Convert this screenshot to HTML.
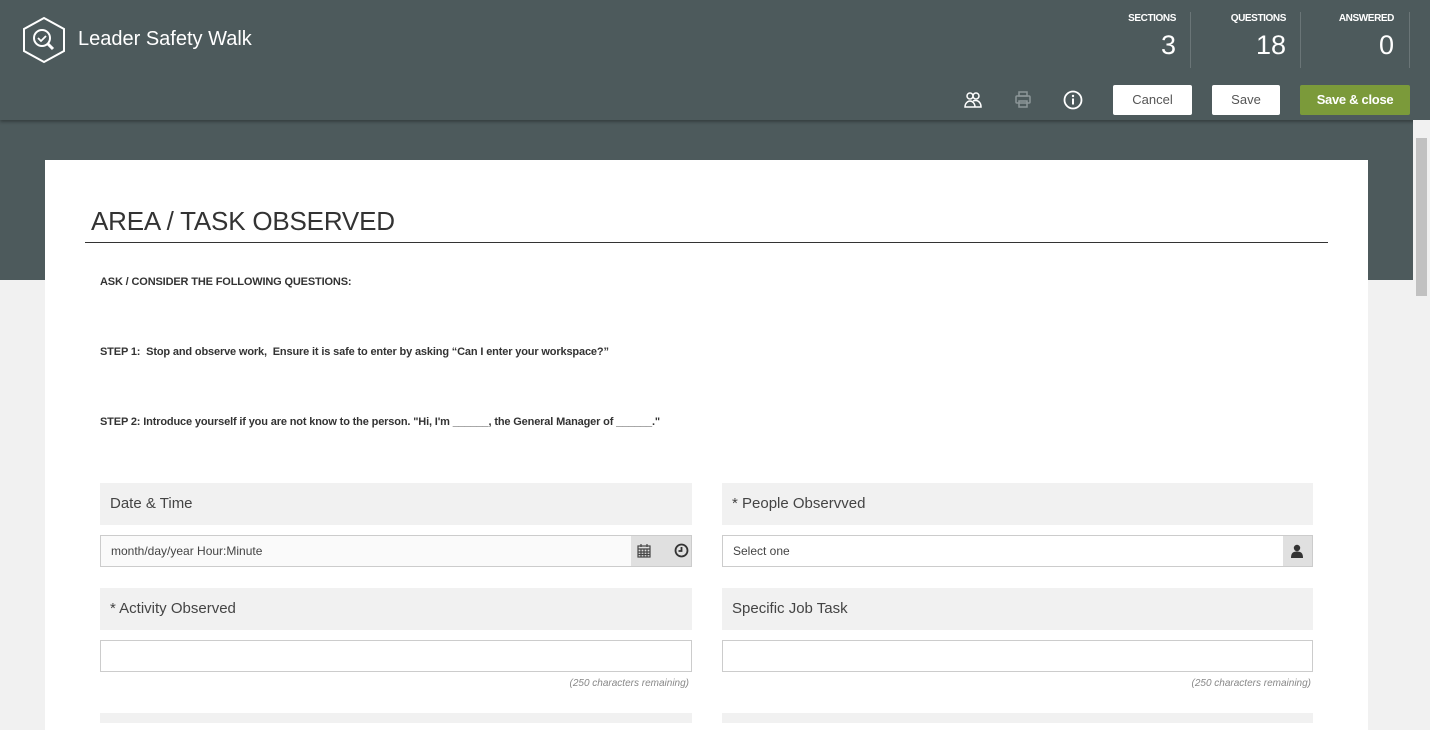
<!DOCTYPE html>
<html><head><style>
*{box-sizing:border-box;margin:0;padding:0}
body{width:1430px;height:719px;overflow:hidden;background:#f1f1f1;font-family:"Liberation Sans",Arial,sans-serif;position:relative}
.hdr{position:absolute;left:0;top:0;width:1430px;height:120px;background:#4d5a5c;box-shadow:0 2px 3px rgba(0,0,0,.3);z-index:2}
.band{position:absolute;left:0;top:120px;width:1430px;height:160px;background:#4d5a5c}
.title{position:absolute;left:78px;top:28px;color:#fff;font-size:20px}
.stat{position:absolute;top:13px;color:#fff;text-align:right}
.stat .l{font-size:10px;font-weight:bold;letter-spacing:-.4px}
.stat .n{font-size:27px;margin-top:6px}
.sep{position:absolute;top:12px;width:1px;height:56px;background:#6a7577}
.btn{position:absolute;top:85px;height:30px;background:#fff;border-radius:2px;font-size:13px;color:#555;text-align:center;line-height:30px}
.card{position:absolute;left:45px;top:160px;width:1323px;height:570px;background:#fff}
h1{position:absolute;left:46px;top:46px;font-weight:normal;font-size:26px;color:#333;letter-spacing:-.2px}
.rule{position:absolute;left:40px;top:82px;width:1243px;height:1px;background:#333}
.p{position:absolute;left:55px;font-size:11px;color:#333;font-weight:bold;letter-spacing:-.15px}
.lab{position:absolute;height:42px;background:#f1f1f1;font-size:15px;color:#444;padding:12px 10px}
.inp{position:absolute;height:32px;border:1px solid #ccc;background:#fff;font-size:12px;color:#444;padding:8px 10px}
.rem{position:absolute;font-size:10px;font-style:italic;color:#888;text-align:right;width:300px}
.sb{position:absolute;right:0;top:120px;width:17px;height:599px;background:#f1f1f1;z-index:3}
</style></head><body>
<div class="hdr">
<svg style="position:absolute;left:21px;top:16px" width="46" height="48" viewBox="0 0 46 48"><polygon points="23,2 43,13 43,35 23,46 3,35 3,13" fill="none" stroke="#fff" stroke-width="2"/><circle cx="21" cy="22" r="8" fill="none" stroke="#fff" stroke-width="2"/><path d="M17 22l3 3 5-5" fill="none" stroke="#fff" stroke-width="1.8"/><path d="M27 28l5 5" stroke="#fff" stroke-width="3"/></svg>
<div class="title">Leader Safety Walk</div>
<div class="stat" style="right:254px"><div class="l">SECTIONS</div><div class="n">3</div></div>
<div class="sep" style="left:1190px"></div>
<div class="stat" style="right:144px"><div class="l">QUESTIONS</div><div class="n">18</div></div>
<div class="sep" style="left:1300px"></div>
<div class="stat" style="right:36px"><div class="l">ANSWERED</div><div class="n">0</div></div>
<div class="sep" style="left:1409px"></div>
<svg style="position:absolute;left:963px;top:91px" width="20" height="18" viewBox="0 0 20 18" fill="none" stroke="#fff" stroke-width="1.5"><circle cx="7" cy="5" r="3"/><circle cx="13" cy="5" r="3"/><path d="M2 16c0-4 3-6 5-6s5 2 5 6zM10 10c1-.5 2-.5 3-.5 2 0 5 2 5 6.5h-6"/></svg>
<svg style="position:absolute;left:1015px;top:91px" width="16" height="17" viewBox="0 0 16 17" fill="none" stroke="#8c9698" stroke-width="1.5"><rect x="4" y="1" width="8" height="4"/><rect x="1" y="5" width="14" height="7" rx="1"/><rect x="4" y="10" width="8" height="6"/></svg>
<svg style="position:absolute;left:1063px;top:90px" width="20" height="20" viewBox="0 0 20 20"><circle cx="10" cy="10" r="8.5" fill="none" stroke="#fff" stroke-width="1.8"/><rect x="9" y="8.5" width="2" height="6" fill="#fff"/><circle cx="10" cy="6" r="1.2" fill="#fff"/></svg>
<div class="btn" style="left:1113px;width:79px">Cancel</div>
<div class="btn" style="left:1212px;width:68px">Save</div>
<div class="btn" style="left:1300px;width:110px;background:#7b9a3a;color:#fff;font-weight:bold;letter-spacing:-.3px">Save &amp; close</div>
</div>
<div class="band"></div>
<div class="sb"><div style="position:absolute;left:3px;top:18px;width:11px;height:158px;background:#c1c1c1"></div></div>
<div class="card">
<h1>AREA / TASK OBSERVED</h1>
<div class="rule"></div>
<div class="p" style="top:116px">ASK / CONSIDER THE FOLLOWING QUESTIONS:</div>
<div class="p" style="top:186px">STEP 1:&nbsp; Stop and observe work,&nbsp; Ensure it is safe to enter by asking “Can I enter your workspace?”</div>
<div class="p" style="top:256px">STEP 2: Introduce yourself if you are not know to the person. "Hi, I'm ______, the General Manager of ______."</div>
<div class="lab" style="left:55px;top:323px;width:592px">Date &amp; Time</div>
<div class="lab" style="left:677px;top:323px;width:591px">* People Observved</div>
<div class="inp" style="left:55px;top:375px;width:592px;background:#fafafa">month/day/year Hour:Minute</div>
<div style="position:absolute;left:586px;top:376px;width:60px;height:30px;background:#e0e0e0"></div>
<svg style="position:absolute;left:592px;top:383px" width="14" height="15" viewBox="0 0 14 15" fill="none" stroke="#444" stroke-width="1.2"><rect x="1" y="3" width="12" height="11"/><path d="M1 6h12M4 1v3M10 1v3M1 9h12M1 11.5h12M4 6v8M7 6v8M10 6v8"/></svg>
<svg style="position:absolute;left:629px;top:383px" width="15" height="15" viewBox="0 0 15 15" fill="none" stroke="#333" stroke-width="1.8"><circle cx="7.5" cy="7.5" r="6"/><path d="M7.5 4v4h-3"/></svg>
<div class="inp" style="left:677px;top:375px;width:591px">Select one</div>
<div style="position:absolute;left:1238px;top:376px;width:29px;height:30px;background:#e0e0e0"></div>
<svg style="position:absolute;left:1246px;top:384px" width="12" height="14" viewBox="0 0 12 14" fill="#333"><circle cx="6" cy="4" r="3.2"/><path d="M0 14c0-5 2-6.5 6-6.5s6 1.5 6 6.5z"/></svg>
<div class="lab" style="left:55px;top:428px;width:592px">* Activity Observed</div>
<div class="lab" style="left:677px;top:428px;width:591px">Specific Job Task</div>
<div class="inp" style="left:55px;top:480px;width:592px"></div>
<div class="inp" style="left:677px;top:480px;width:591px"></div>
<div class="rem" style="left:344px;top:518px">(250 characters remaining)</div>
<div class="rem" style="left:966px;top:518px">(250 characters remaining)</div>
<div style="position:absolute;left:55px;top:553px;width:592px;height:10px;background:#f1f1f1"></div>
<div style="position:absolute;left:677px;top:553px;width:591px;height:10px;background:#f1f1f1"></div>
</div>
</body></html>
